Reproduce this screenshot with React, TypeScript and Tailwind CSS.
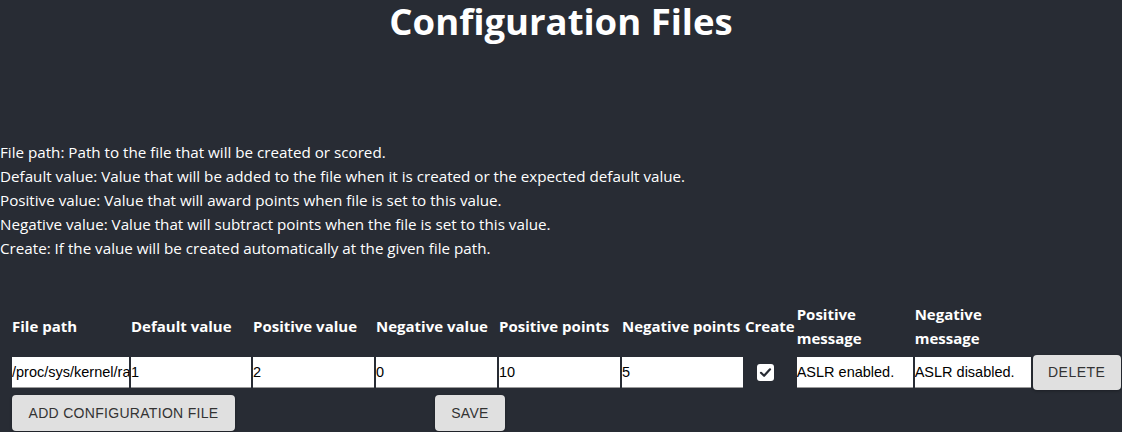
import React, { useState } from 'react';

const descriptions = [
  'File path: Path to the file that will be created or scored.',
  'Default value: Value that will be added to the file when it is created or the expected default value.',
  'Positive value: Value that will award points when file is set to this value.',
  'Negative value: Value that will subtract points when the file is set to this value.',
  'Create: If the value will be created automatically at the given file path.',
];

function TextCell({ value, width }: { value: string; width: string }) {
  const [v, setV] = useState(value);
  return (
    <td className="p-0 align-middle">
      <input
        value={v}
        onChange={e => setV(e.target.value)}
        className={`${width} h-[31px] bg-white text-black border-0 border-b border-[#9a9a9a] px-0 text-[14.5px] outline-none block`}
        style={{ fontFamily: '"Liberation Sans", Arial, sans-serif' }}
      />
    </td>
  );
}

export default function App() {
  const [create, setCreate] = useState(true);

  return (
    <div
      className="min-h-screen bg-[#282c34] text-white"
      style={{ fontFamily: '"Open Sans", "Noto Sans", sans-serif' }}
    >
      <h1 className="m-0 text-center text-[36.5px] font-bold leading-[43px]">Configuration Files</h1>

      <div className="mt-[97px] text-[15.2px] leading-6">
        {descriptions.map(d => (
          <div key={d}>{d}</div>
        ))}
      </div>

      <table className="mt-[40px] ml-[10px] table-fixed border-separate border-spacing-[2px] text-left">
        <thead>
          <tr className="h-[48px] text-[15px] font-bold leading-6">
            <th className="w-[117px] p-0 whitespace-nowrap">File path</th>
            <th className="w-[120px] p-0 whitespace-nowrap">Default value</th>
            <th className="w-[121px] p-0 whitespace-nowrap">Positive value</th>
            <th className="w-[121px] p-0 whitespace-nowrap">Negative value</th>
            <th className="w-[121px] p-0 whitespace-nowrap">Positive points</th>
            <th className="w-[121px] p-0 whitespace-nowrap">Negative points</th>
            <th className="w-[49px] p-0 whitespace-nowrap">Create</th>
            <th className="w-[116px] p-0">Positive<br />message</th>
            <th className="w-[116px] p-0">Negative<br />message</th>
            <th className="w-[88px] p-0"></th>
          </tr>
        </thead>
        <tbody>
          <tr className="h-[41px]">
            <TextCell value="/proc/sys/kernel/randomize_va_space" width="w-[117px]" />
            <TextCell value="1" width="w-[120px]" />
            <TextCell value="2" width="w-[121px]" />
            <TextCell value="0" width="w-[121px]" />
            <TextCell value="10" width="w-[121px]" />
            <TextCell value="5" width="w-[121px]" />
            <td className="p-0 pl-[12px] align-middle">
              <button
                onClick={() => setCreate(c => !c)}
                className="w-[17px] h-[17px] rounded-[3px] bg-white flex items-center justify-center"
              >
                {create && (
                  <svg width="13" height="13" viewBox="0 0 13 13" fill="none">
                    <path d="M2 6.8 L5.1 9.8 L11 3.3" stroke="#282c34" strokeWidth="2.2" strokeLinecap="round" strokeLinejoin="round" />
                  </svg>
                )}
              </button>
            </td>
            <TextCell value="ASLR enabled." width="w-[116px]" />
            <TextCell value="ASLR disabled." width="w-[116px]" />
            <td className="p-0 align-middle">
              <button
                className="w-[88px] h-[35px] rounded-[4px] bg-[#e0e0e0] text-[#333] text-[14px] tracking-[0.5px] shadow-[0_1px_3px_rgba(0,0,0,0.3)]"
                style={{ fontFamily: '"Liberation Sans", Arial, sans-serif' }}
              >
                DELETE
              </button>
            </td>
          </tr>
        </tbody>
      </table>

      <div className="flex pl-[12px]" style={{ fontFamily: '"Liberation Sans", Arial, sans-serif' }}>
        <button className="w-[223px] h-[36px] rounded-[4px] bg-[#e0e0e0] text-[#333] text-[14px] tracking-[0.3px] shadow-[0_1px_3px_rgba(0,0,0,0.3)]">
          ADD CONFIGURATION FILE
        </button>
        <button className="ml-[200px] w-[70px] h-[36px] rounded-[4px] bg-[#e0e0e0] text-[#333] text-[14px] tracking-[0.3px] shadow-[0_1px_3px_rgba(0,0,0,0.3)]">
          SAVE
        </button>
      </div>
    </div>
  );
}
